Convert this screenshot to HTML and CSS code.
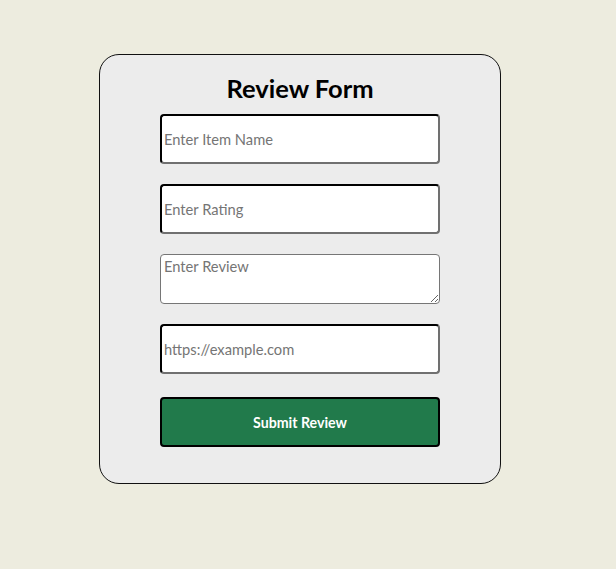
FILE: index.html
```html
<!DOCTYPE html>
<html lang="en">
<head>
<meta charset="utf-8">
<title>Review Form</title>
<link rel="stylesheet" href="styles.css">
</head>
<body>
<div class="page">
  <form class="card">
    <h2 class="title">Review Form</h2>
    <input class="field" type="text" placeholder="Enter Item Name">
    <input class="field" type="text" placeholder="Enter Rating">
    <textarea class="area" placeholder="Enter Review"></textarea>
    <input class="field" type="url" placeholder="https://example.com">
    <button class="submit" type="button">Submit Review</button>
  </form>
</div>
</body>
</html>
```
FILE: styles.css
```css
html, body {
  margin: 0;
  padding: 0;
}
body {
  background: #edecdf;
  font-family: "Lato", "Noto Sans", sans-serif;
}
.page {
  padding: 54px 0 0 99px;
}
.card {
  border: 1px solid #111;
  border-radius: 20px;
  background: #ececec;
  padding: 0 60px 36px;
  box-sizing: border-box;
  width: 402px;
  display: flex;
  flex-direction: column;
  gap: 20px;
}
.title {
  margin: 16px 0 -11px;
  text-align: center;
  font-size: 25.5px;
  line-height: 34px;
  font-weight: 700;
  color: #000;
}
.field, .area {
  font-family: inherit;
  font-size: 14.7px;
  border-radius: 4px;
  background: #fff;
  box-sizing: border-box;
  width: 280px;
  height: 50px;
  margin: 0;
  padding: 0 2px;
  color: #333;
}
.field {
  border: 2px inset #767676;
  border-top-color: #222;
  border-left-color: #222;
  border-right-color: #707070;
  border-bottom-color: #707070;
}
.area {
  border: 1px solid #767676;
  padding: 2px 3px;
  resize: both;
}
.field::placeholder, .area::placeholder {
  color: #757575;
}
.submit {
  margin-top: 3px;
  height: 50px;
  width: 280px;
  border: 2px solid #000;
  border-radius: 4px;
  background: #217a4b;
  color: #fff;
  font-family: inherit;
  font-weight: 700;
  font-size: 14.2px;
}
```
